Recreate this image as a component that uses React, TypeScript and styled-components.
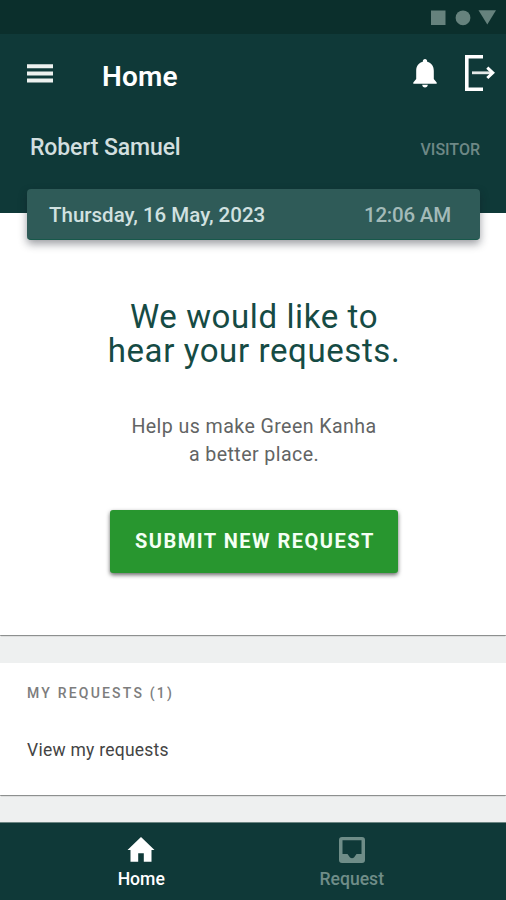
import React from "react";
import styled, { createGlobalStyle } from "styled-components";

const GlobalStyle = createGlobalStyle`
  * { box-sizing: border-box; }
  body { margin: 0; background: #eef0f0; font-family: Roboto, sans-serif; }
  h1, h2, p { margin: 0; }
  button { font-family: inherit; border: 0; padding: 0; background: none; cursor: pointer; }
  svg { display: block; flex: none; }
`;

const Screen = styled.div`
  width: 506px;
  height: 900px;
  display: flex;
  flex-direction: column;
  overflow: hidden;
`;

const StatusBar = styled.div`
  height: 34px;
  flex: none;
  display: flex;
  justify-content: flex-end;
  padding: 10px 10px 0 0;
  background: #0b2f2c;
`;

const Header = styled.header`
  height: 179px;
  flex: none;
  background: #0f3938;
`;

const Toolbar = styled.div`
  height: 84px;
  display: flex;
  align-items: center;
  padding: 0 11px 6px 27px;
`;

const IconButton = styled.button<{ $gap?: number }>`
  margin-left: ${(p) => p.$gap ?? 0}px;
`;

const Title = styled.h1`
  flex: 1;
  margin-left: 49px;
  padding-top: 7px;
  font-size: 28px;
  line-height: 34px;
  font-weight: 600;
  letter-spacing: 0.2px;
  color: #fff;
`;

const UserRow = styled.div`
  display: flex;
  justify-content: space-between;
  align-items: baseline;
  padding: 16px 26px 0 30px;
`;

const UserName = styled.span`
  font-size: 23px;
  line-height: 28px;
  letter-spacing: -0.12px;
  font-weight: 500;
  color: #d2dfdf;
`;

const Role = styled.span`
  font-size: 16px;
  font-weight: 500;
  color: #6e8886;
`;

const DateCard = styled.div`
  position: relative;
  display: flex;
  justify-content: space-between;
  align-items: center;
  height: 51px;
  margin: 27px 26px 0 27px;
  padding: 1px 29px 0 22px;
  border-radius: 4px;
  border-bottom: 1px solid #17584a;
  background: #2f5b58;
  box-shadow: 0 4px 9px rgba(20, 25, 35, 0.42);
  font-size: 20.5px;
  font-weight: 500;
`;

const DateText = styled.span`
  color: #d1e1e0;
`;

const TimeText = styled.span`
  letter-spacing: -0.2px;
  color: #a3bab8;
`;

const Hero = styled.main`
  height: 422px;
  flex: none;
  display: flex;
  flex-direction: column;
  align-items: center;
  padding: 87px 0 0 2px;
  background: #fff;
  text-align: center;
  box-shadow: 0 2px 1px -1px #8d908f, 0 1px 0 #a3a6a5;
`;

const Headline = styled.h2`
  font-size: 33px;
  line-height: 34px;
  font-weight: 400;
  letter-spacing: 0.6px;
  color: #164b44;
`;

const Lead = styled.p`
  margin-top: 45px;
  font-size: 19.6px;
  line-height: 28px;
  letter-spacing: 0.42px;
  color: #626464;
`;

const SubmitButton = styled.button`
  width: 288px;
  height: 63px;
  margin-top: 41px;
  padding: 0 0 2px 2px;
  border-radius: 3px;
  background: #28962f;
  box-shadow: 0 2px 4px rgba(0, 0, 0, 0.6);
  color: #f4fff4;
  font-size: 20px;
  font-weight: 700;
  letter-spacing: 1.5px;
`;

const RequestCard = styled.section`
  height: 132px;
  flex: none;
  margin-top: 28px;
  padding: 21px 27px;
  background: #fff;
  box-shadow: 0 2px 1px -1px #8d908f, 0 1px 0 #a3a6a5;
`;

const CardLabel = styled.h2`
  font-size: 14px;
  line-height: 18px;
  font-weight: 500;
  letter-spacing: 2.2px;
  color: #7d7d7d;
`;

const CardLink = styled.p`
  margin-top: 37px;
  font-size: 17.5px;
  line-height: 22px;
  letter-spacing: 0.25px;
  color: #444;
`;

const BottomNav = styled.nav`
  display: flex;
  height: 77px;
  flex: none;
  margin-top: auto;
  padding: 0 49px 0 36px;
  background: #0f3938;
  box-shadow: 0 -1px 0 #6c8582;
`;

const NavItem = styled.button<{ $active?: boolean }>`
  flex: 1;
  display: flex;
  flex-direction: column;
  align-items: center;
  padding-top: 11px;
  color: ${(p) => (p.$active ? "#fff" : "#6f8d88")};
`;

const NavLabel = styled.span`
  margin-top: 2px;
  font-size: 17.6px;
  line-height: 22px;
  font-weight: 500;
`;

const SystemIcons = () => (
  <svg width="66" height="16" viewBox="0 0 66 16" fill="#66827d">
    <path d="M1 0.5h14.5v14.5H1z" />
    <circle cx="33" cy="7.8" r="7.400" />
    <path d="M48.500 0.200H66L57.300 14.500z" />
  </svg>
);

const MenuIcon = () => (
  <svg width="26" height="19" viewBox="0 0 26 19" fill="#edf1ef">
    <path d="M0 0.200h26v4H0zM0 7.400h26v4H0zM0 14.600h26v4H0z" />
  </svg>
);

const BellIcon = () => (
  <svg width="24" height="29" viewBox="0 0 24 29" fill="#fff">
    <path d="M12 0c1.400 0 2.200 1 2.200 2.700 4.400 1.200 6.600 4.500 6.600 9V20l2.900 3.500v1.300H0.300v-1.300L3.200 20v-8.300c0-4.500 2.200-7.800 6.600-9C9.800 1 10.600 0 12 0zM9.200 25.800h5.600c0 1.600-1.200 2.700-2.800 2.700s-2.800-1.100-2.800-2.700z" />
  </svg>
);

const ExitIcon = () => (
  <svg width="31" height="38" viewBox="0 0 31 38" fill="none" stroke="#fff" strokeWidth="3.600">
    <path d="M19 2.800H2.800v32.500H19" />
    <path d="M8 18.800h20" strokeWidth="2.800" stroke="#e3e8e7" />
    <path d="M23.300 13.600l5.500 5.200-5.500 5.200" strokeWidth="3" />
  </svg>
);

const HomeIcon = () => (
  <svg width="28" height="32" viewBox="0 0 28 32" fill="currentColor">
    <path d="M14 3L27.500 16h-3v11.800h-7.700v-8.600h-5.600v8.600H3.500V16h-3z" />
  </svg>
);

const InboxIcon = () => (
  <svg width="28" height="32" viewBox="0 0 28 32" fill="currentColor" fillRule="evenodd">
    <path d="M4 3h20a3 3 0 0 1 3 3v20a3 3 0 0 1-3 3H4a3 3 0 0 1-3-3V6a3 3 0 0 1 3-3zM4.500 6.300v13.700h5l2.500 3.500q2 1.300 4 0l2.500-3.500h5V6.300z" />
  </svg>
);

export default function App() {
  return (
    <>
      <GlobalStyle />
      <Screen>
        <StatusBar>
          <SystemIcons />
        </StatusBar>
        <Header>
          <Toolbar>
            <IconButton aria-label="Menu">
              <MenuIcon />
            </IconButton>
            <Title>Home</Title>
            <IconButton aria-label="Notifications">
              <BellIcon />
            </IconButton>
            <IconButton aria-label="Sign out" $gap={27}>
              <ExitIcon />
            </IconButton>
          </Toolbar>
          <UserRow>
            <UserName>Robert Samuel</UserName>
            <Role>VISITOR</Role>
          </UserRow>
          <DateCard>
            <DateText>Thursday, 16 May, 2023</DateText>
            <TimeText>12:06 AM</TimeText>
          </DateCard>
        </Header>
        <Hero>
          <Headline>
            We would like to
            <br />
            hear your requests.
          </Headline>
          <Lead>
            Help us make Green Kanha
            <br />a better place.
          </Lead>
          <SubmitButton>SUBMIT NEW REQUEST</SubmitButton>
        </Hero>
        <RequestCard>
          <CardLabel>MY REQUESTS (1)</CardLabel>
          <CardLink>View my requests</CardLink>
        </RequestCard>
        <BottomNav>
          <NavItem $active>
            <HomeIcon />
            <NavLabel>Home</NavLabel>
          </NavItem>
          <NavItem>
            <InboxIcon />
            <NavLabel>Request</NavLabel>
          </NavItem>
        </BottomNav>
      </Screen>
    </>
  );
}
